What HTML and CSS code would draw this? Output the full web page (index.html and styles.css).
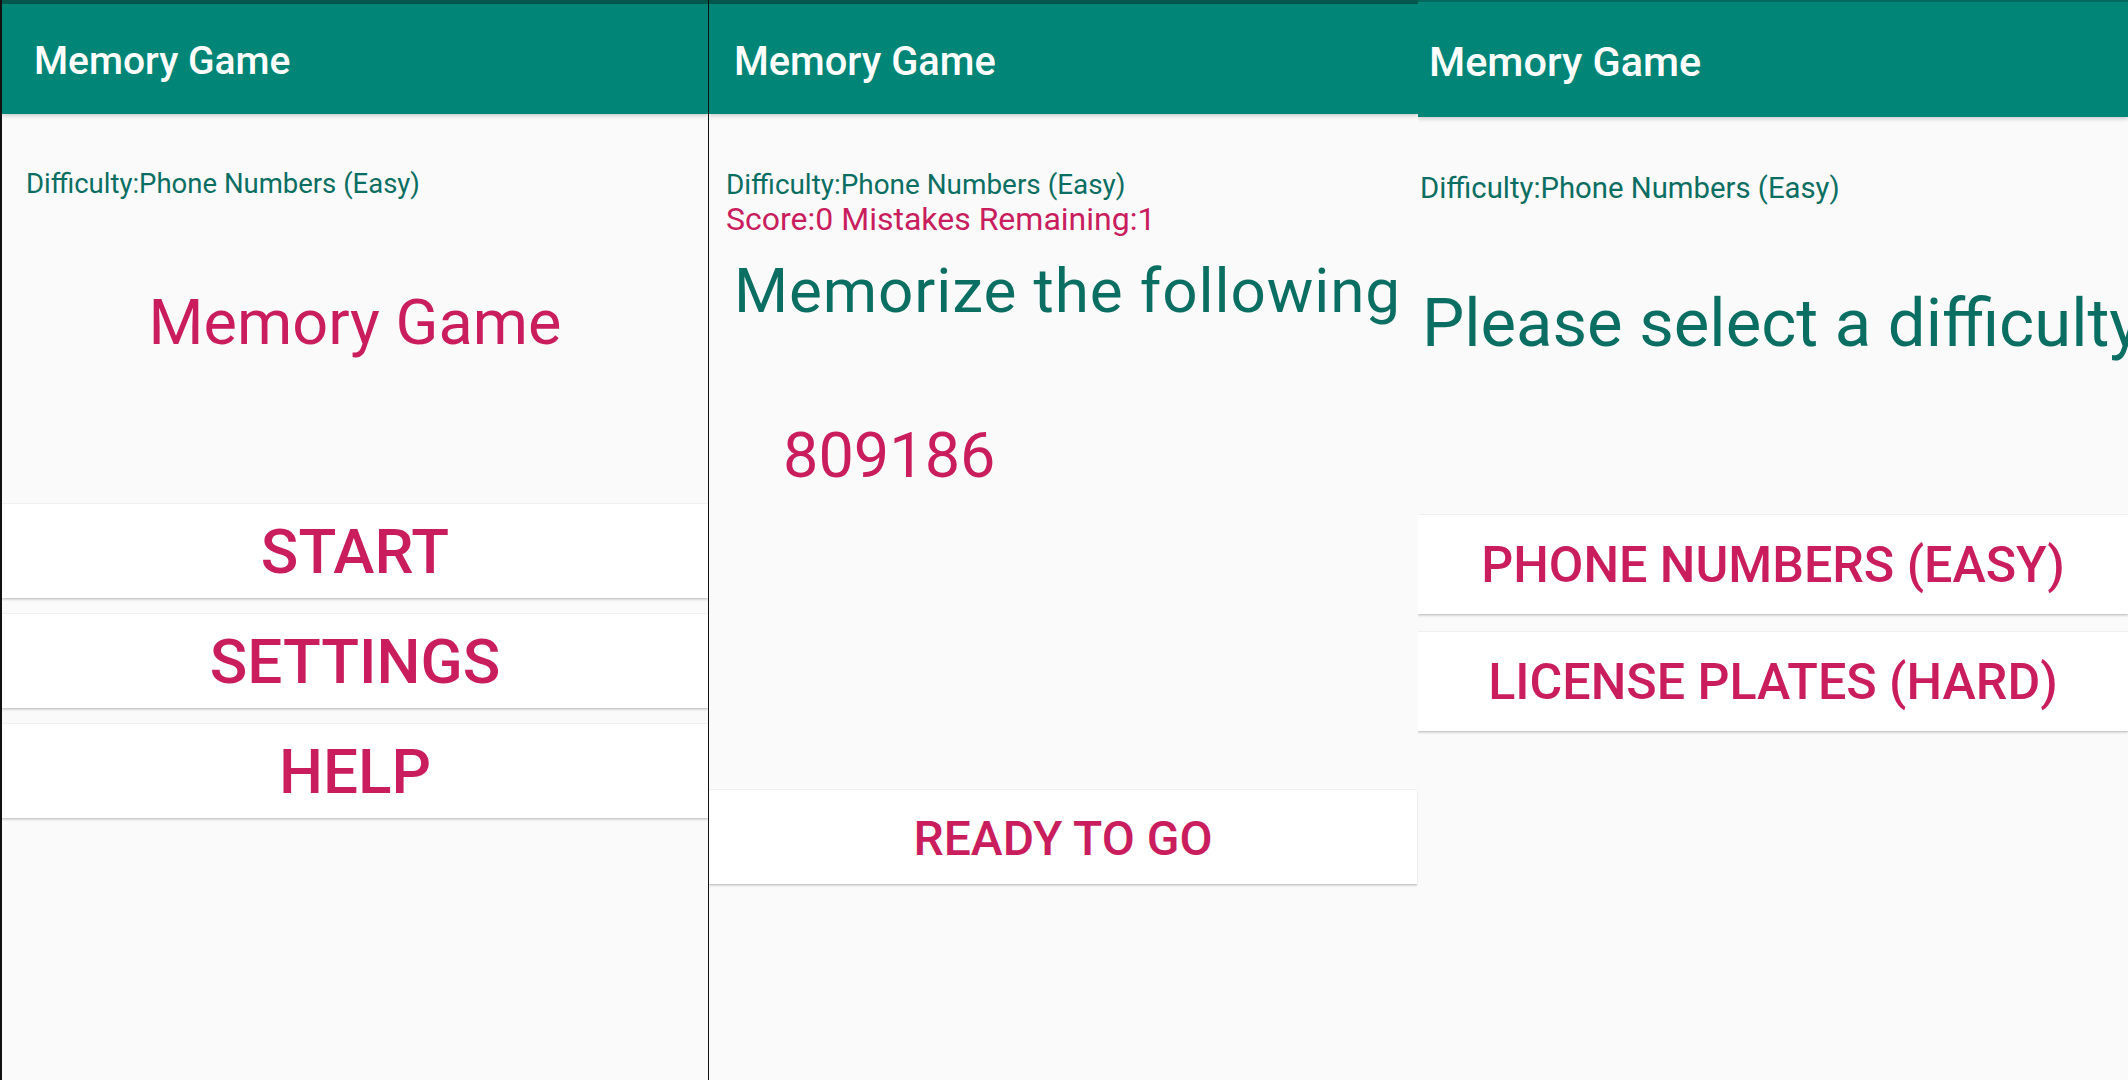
FILE: index.html
```html
<!DOCTYPE html>
<html>
<head>
<meta charset="utf-8">
<title>Memory Game</title>
<link rel="stylesheet" href="styles.css">
</head>
<body>
<div class="screens">
  <section class="panel panel-1">
    <div class="status"></div>
    <header class="appbar"><span class="appbar-title">Memory Game</span></header>
    <div class="content">
      <p class="difficulty">Difficulty:Phone Numbers (Easy)</p>
      <h1 class="hero-title">Memory Game</h1>
      <div class="menu">
        <button class="btn btn-main">START</button>
        <button class="btn btn-main">SETTINGS</button>
        <button class="btn btn-main">HELP</button>
      </div>
    </div>
  </section>
  <section class="panel panel-2">
    <div class="status"></div>
    <header class="appbar"><span class="appbar-title">Memory Game</span></header>
    <div class="content">
      <p class="difficulty">Difficulty:Phone Numbers (Easy)</p>
      <p class="score">Score:0 Mistakes Remaining:1</p>
      <h2 class="prompt">Memorize the following</h2>
      <p class="number">809186</p>
      <button class="btn btn-ready">READY TO GO</button>
    </div>
  </section>
  <section class="panel panel-3">
    <header class="appbar"><span class="appbar-title">Memory Game</span></header>
    <div class="content">
      <p class="difficulty">Difficulty:Phone Numbers (Easy)</p>
      <h2 class="select">Please select a difficulty</h2>
      <div class="menu">
        <button class="btn btn-choice">PHONE NUMBERS (EASY)</button>
        <button class="btn btn-choice">LICENSE PLATES (HARD)</button>
      </div>
    </div>
  </section>
</div>
</body>
</html>
```
FILE: styles.css
```css
* { box-sizing: border-box; }
html, body {
  margin: 0;
  padding: 0;
  width: 2128px;
  height: 1080px;
  overflow: hidden;
  background: #fafafa;
  font-family: Roboto, "Noto Sans", sans-serif;
}
p, h1, h2 { margin: 0; font-weight: 400; }

.screens {
  display: flex;
  height: 1080px;
}

.panel {
  display: flex;
  flex-direction: column;
  height: 1080px;
  background: #fafafa;
  overflow: hidden;
}
.panel-1 {
  width: 709px;
  border-left: 2px solid #111;
  border-right: 1px solid #111;
}
.panel-2 { width: 709px; }
.panel-3 { width: 710px; }

.status {
  height: 4px;
  background: #00574b;
  flex: none;
}

.appbar {
  flex: none;
  height: 110px;
  background: #008577;
  color: #fff;
  padding-top: 34px;
  box-shadow: 0 2px 4px rgba(0,0,0,0.18);
  position: relative;
  z-index: 1;
}
.appbar-title {
  display: block;
  font-size: 39px;
  line-height: 1.2;
  font-weight: 500;
  white-space: nowrap;
}
.panel-1 .appbar-title { padding-left: 32px; }
.panel-2 .appbar-title { padding-left: 25px; font-size: 39.8px; }
.panel-3 .appbar {
  height: 117px;
  padding-top: 36px;
  border-top: 2px solid #00685d;
}
.panel-3 .appbar-title { padding-left: 11px; font-size: 41.4px; }

.content {
  display: flex;
  flex-direction: column;
  white-space: nowrap;
}

.difficulty {
  color: #0b6e62;
  font-size: 27.5px;
  line-height: 1.2;
}
.panel-1 .difficulty { margin-top: 53px; padding-left: 24px; }
.panel-2 .difficulty { margin-top: 54px; padding-left: 17px; font-size: 27.9px; }
.panel-3 .difficulty { margin-top: 54px; padding-left: 2px; font-size: 29.3px; }

.hero-title {
  color: #c91d5e;
  font-size: 63px;
  line-height: 1.2;
  text-align: center;
  margin-top: 85px;
}

.menu {
  display: flex;
  flex-direction: column;
}
.panel-1 .menu { margin-top: 142px; gap: 15px; }
.panel-3 .menu { margin-top: 150px; gap: 17px; }

.btn {
  display: flex;
  align-items: center;
  justify-content: center;
  width: 100%;
  border: none;
  border-top: 1px solid #f0f0f0;
  background: #fff;
  color: #c91d5e;
  font-family: Roboto, "Noto Sans", sans-serif;
  font-weight: 500;
  line-height: 1.2;
  padding: 0;
  box-shadow: 0 2px 2px rgba(0,0,0,0.14), 0 1px 1px rgba(0,0,0,0.06);
}
.btn-main {
  height: 95px;
  font-size: 62px;
  padding-top: 4px;
}

.score {
  color: #c91d5e;
  font-size: 32px;
  line-height: 1.2;
  padding-left: 17px;
  margin-top: -1px;
}
.prompt {
  color: #0b6e62;
  font-size: 62px;
  letter-spacing: 0.9px;
  line-height: 1.2;
  padding-left: 25px;
  margin-top: 15px;
}
.number {
  color: #c91d5e;
  font-size: 63px;
  line-height: 1.2;
  padding-left: 74px;
  margin-top: 90px;
}
.btn-ready {
  height: 95px;
  font-size: 48px;
  margin-top: 295px;
  width: 708px;
  padding-top: 4px;
}

.select {
  color: #0b6e62;
  font-size: 67px;
  line-height: 1.2;
  padding-left: 4px;
  margin-top: 77px;
}
.btn-choice {
  height: 100px;
  font-size: 50.2px;
  padding-top: 2px;
}
```
